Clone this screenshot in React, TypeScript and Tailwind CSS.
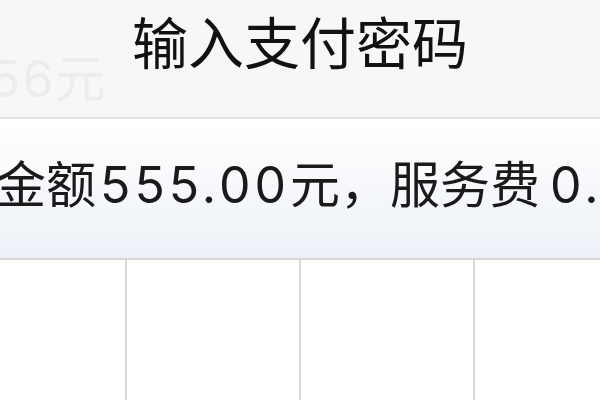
import React from 'react';

const font = 'Inter, "Noto Sans CJK SC", "Noto Sans", sans-serif';

export default function App() {
  return (
    <div className="w-[600px] h-[400px] overflow-hidden bg-white" style={{ fontFamily: font }}>
      {/* 标题栏 */}
      <div className="relative h-[119px] bg-[#f7f7f7] border-b-2 border-[#e2e2e2] flex items-start justify-center">
        <span className="absolute left-[-10px] top-[54px] text-[50px] leading-none tracking-[2px] text-[#ececec] whitespace-nowrap">
          56元
        </span>
        <h1 className="relative mt-[8px] text-[56px] leading-[72px] font-normal text-[#111]">
          输入支付密码
        </h1>
      </div>

      {/* 金额信息 */}
      <div className="h-[141px] bg-gradient-to-b from-white to-[#edf1f7] border-b-2 border-[#d6d6d6] flex items-center overflow-hidden">
        <p className="ml-[-4px] mt-[-8px] text-[50px] leading-none text-[#1a1a1a] whitespace-nowrap">
          <span>金额</span>
          <span className="ml-[4px] tracking-[4px]">555.00</span>
          <span>元，服务费</span>
          <span className="ml-[10px] tracking-[4px]">0.50</span>
          <span>元</span>
        </p>
      </div>

      {/* 密码格 */}
      <div className="flex h-[140px]">
        <div className="w-[125px] shrink-0" />
        <div className="w-[174px] shrink-0 border-l-2 border-[#d8d8d8]" />
        <div className="w-[174px] shrink-0 border-l-2 border-[#d8d8d8]" />
        <div className="w-[174px] shrink-0 border-l-2 border-[#d8d8d8]" />
      </div>
    </div>
  );
}
